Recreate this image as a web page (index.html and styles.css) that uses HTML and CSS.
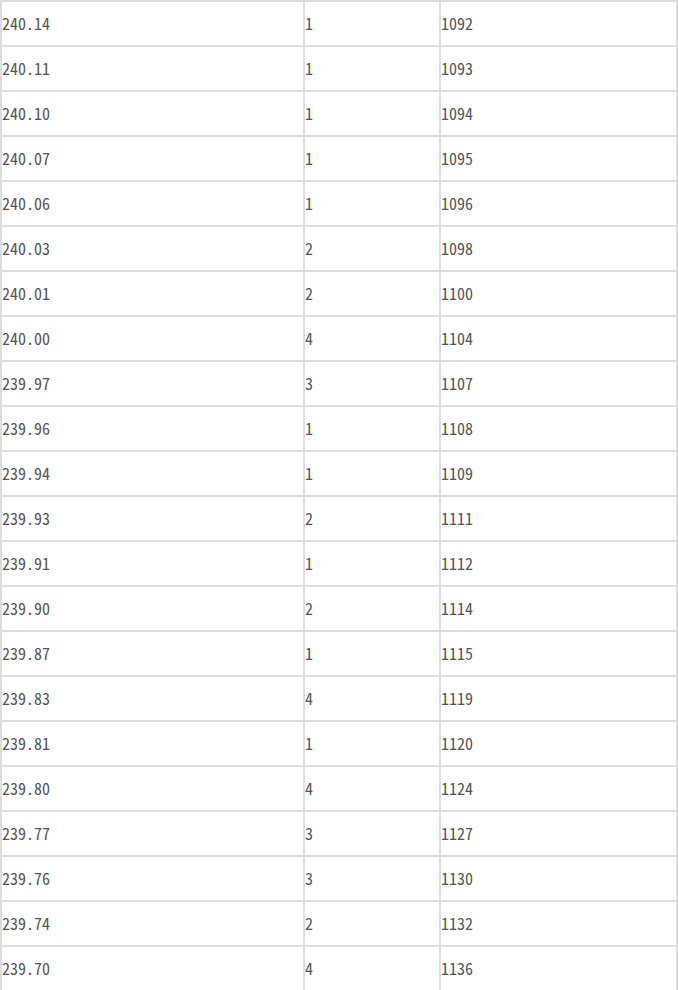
FILE: index.html
```html
<!DOCTYPE html>
<html lang="zh">
<head>
<meta charset="utf-8">
<link rel="stylesheet" href="styles.css">
</head>
<body>
<table class="grid">
<colgroup><col class="c1"><col class="c2"><col class="c3"></colgroup>
<tbody>
<tr><td>240.14</td><td>1</td><td>1092</td></tr>
<tr><td>240.11</td><td>1</td><td>1093</td></tr>
<tr><td>240.10</td><td>1</td><td>1094</td></tr>
<tr><td>240.07</td><td>1</td><td>1095</td></tr>
<tr><td>240.06</td><td>1</td><td>1096</td></tr>
<tr><td>240.03</td><td>2</td><td>1098</td></tr>
<tr><td>240.01</td><td>2</td><td>1100</td></tr>
<tr><td>240.00</td><td>4</td><td>1104</td></tr>
<tr><td>239.97</td><td>3</td><td>1107</td></tr>
<tr><td>239.96</td><td>1</td><td>1108</td></tr>
<tr><td>239.94</td><td>1</td><td>1109</td></tr>
<tr><td>239.93</td><td>2</td><td>1111</td></tr>
<tr><td>239.91</td><td>1</td><td>1112</td></tr>
<tr><td>239.90</td><td>2</td><td>1114</td></tr>
<tr><td>239.87</td><td>1</td><td>1115</td></tr>
<tr><td>239.83</td><td>4</td><td>1119</td></tr>
<tr><td>239.81</td><td>1</td><td>1120</td></tr>
<tr><td>239.80</td><td>4</td><td>1124</td></tr>
<tr><td>239.77</td><td>3</td><td>1127</td></tr>
<tr><td>239.76</td><td>3</td><td>1130</td></tr>
<tr><td>239.74</td><td>2</td><td>1132</td></tr>
<tr><td>239.70</td><td>4</td><td>1136</td></tr>
</tbody>
</table>
</body>
</html>
```
FILE: styles.css
```css
html, body {
  margin: 0;
  padding: 0;
  background: #ffffff;
}

.grid {
  border-collapse: separate;
  border-spacing: 0;
  table-layout: fixed;
  width: 678px;
  margin-top: 0;
  font-family: "Noto Sans Mono CJK SC", "Liberation Mono", monospace;
  font-size: 16px;
  font-weight: 300;
  color: #555555;
}

.grid .c1 { width: 303px; }
.grid .c2 { width: 136px; }
.grid .c3 { width: 239px; }

.grid td {
  height: 20px;
  padding: 11px 0 12px 0;
  border-top: 2px solid #dddddd;
  border-left: 2px solid #dddddd;
  vertical-align: top;
  line-height: 20px;
  white-space: nowrap;
  overflow: hidden;
}

.grid td:last-child {
  border-right: 2px solid #dddddd;
}
```
